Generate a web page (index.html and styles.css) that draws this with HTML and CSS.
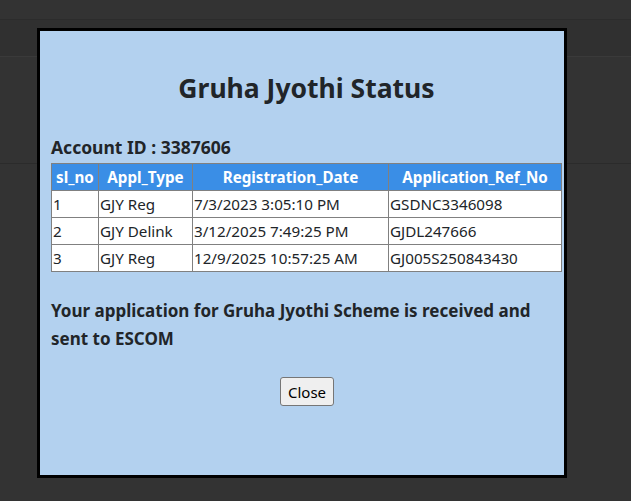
FILE: index.html
```html
<!DOCTYPE html>
<html>
<head>
<meta charset="utf-8">
<link rel="stylesheet" href="styles.css">
</head>
<body>
<div class="page">
  <div class="topbar"></div>
  <div class="navbar"></div>
  <div class="band"></div>
  <div class="rest"></div>
</div>
<div class="modal">
  <h3 class="title">Gruha Jyothi Status</h3>
  <div class="account">Account ID : 3387606</div>
  <table class="status">
    <thead>
      <tr><th class="c1">sl_no</th><th class="c2">Appl_Type</th><th class="c3">Registration_Date</th><th class="c4">Application_Ref_No</th></tr>
    </thead>
    <tbody>
      <tr><td>1</td><td>GJY Reg</td><td>7/3/2023 3:05:10 PM</td><td>GSDNC3346098</td></tr>
      <tr><td>2</td><td>GJY Delink</td><td>3/12/2025 7:49:25 PM</td><td>GJDL247666</td></tr>
      <tr><td>3</td><td>GJY Reg</td><td>12/9/2025 10:57:25 AM</td><td>GJ005S250843430</td></tr>
    </tbody>
  </table>
  <p class="message">Your application for Gruha Jyothi Scheme is received and sent to ESCOM</p>
  <div class="actions"><button class="close">Close</button></div>
</div>
</body>
</html>
```

FILE: styles.css
```css
html, body {
  margin: 0;
  padding: 0;
  background: #333333;
  height: 100%;
  overflow: hidden;
}
body {
  font-family: "Noto Sans", "Open Sans", sans-serif;
  color: #212529;
}
.page {
  display: flex;
  flex-direction: column;
}
.topbar {
  height: 19px;
  background: #333333;
  border-bottom: 1px solid #2c2c2c;
}
.navbar {
  height: 36px;
  background: #303030;
  border-bottom: 1px solid #3a3a3a;
}
.band {
  height: 106px;
  background: #333333;
  border-bottom: 1px solid #2b2b2b;
}
.rest {
  flex: 1;
  background: #333333;
}
.modal {
  position: absolute;
  left: 37px;
  top: 28px;
  width: 524px;
  height: 444px;
  border: 3px solid #000;
  background: #b3d1ef;
  box-sizing: content-box;
  padding: 0;
  overflow: hidden;
}
.title {
  margin: 40px 0 0 0;
  padding-left: 9px;
  text-align: center;
  font-size: 26.5px;
  line-height: 34px;
  font-weight: 700;
}
.account {
  margin: 30px 0 0 11px;
  font-size: 17.5px;
  font-weight: 700;
  line-height: 24px;
}
.status {
  margin: 4px 0 0 11px;
  border-collapse: collapse;
  width: 511px;
  font-size: 15.2px;
  table-layout: fixed;
}
.status th, .status td {
  border: 1px solid #808080;
  padding: 0 1px;
  height: 26px;
  white-space: nowrap;
  overflow: hidden;
}
.status th {
  background: #3a8ee6;
  color: #ffffff;
  font-weight: 700;
  text-align: center;
}
.status td {
  background: #ffffff;
  text-align: left;
}
.c1 { width: 44px; }
.c2 { width: 91px; }
.c3 { width: 193px; }
.c4 { width: 170px; }
.message {
  margin: 25px 11px 0 11px;
  font-size: 17px;
  font-weight: 700;
  line-height: 28px;
}
.actions {
  display: flex;
  justify-content: center;
  margin-top: 24px;
  padding-left: 10px;
}
.close {
  width: 54px;
  height: 29px;
  font-family: "Noto Sans", "Open Sans", sans-serif;
  font-size: 15px;
  color: #000;
  background: #efefef;
  border: 1px solid #767676;
  border-radius: 3px;
  padding: 0;
}
```
